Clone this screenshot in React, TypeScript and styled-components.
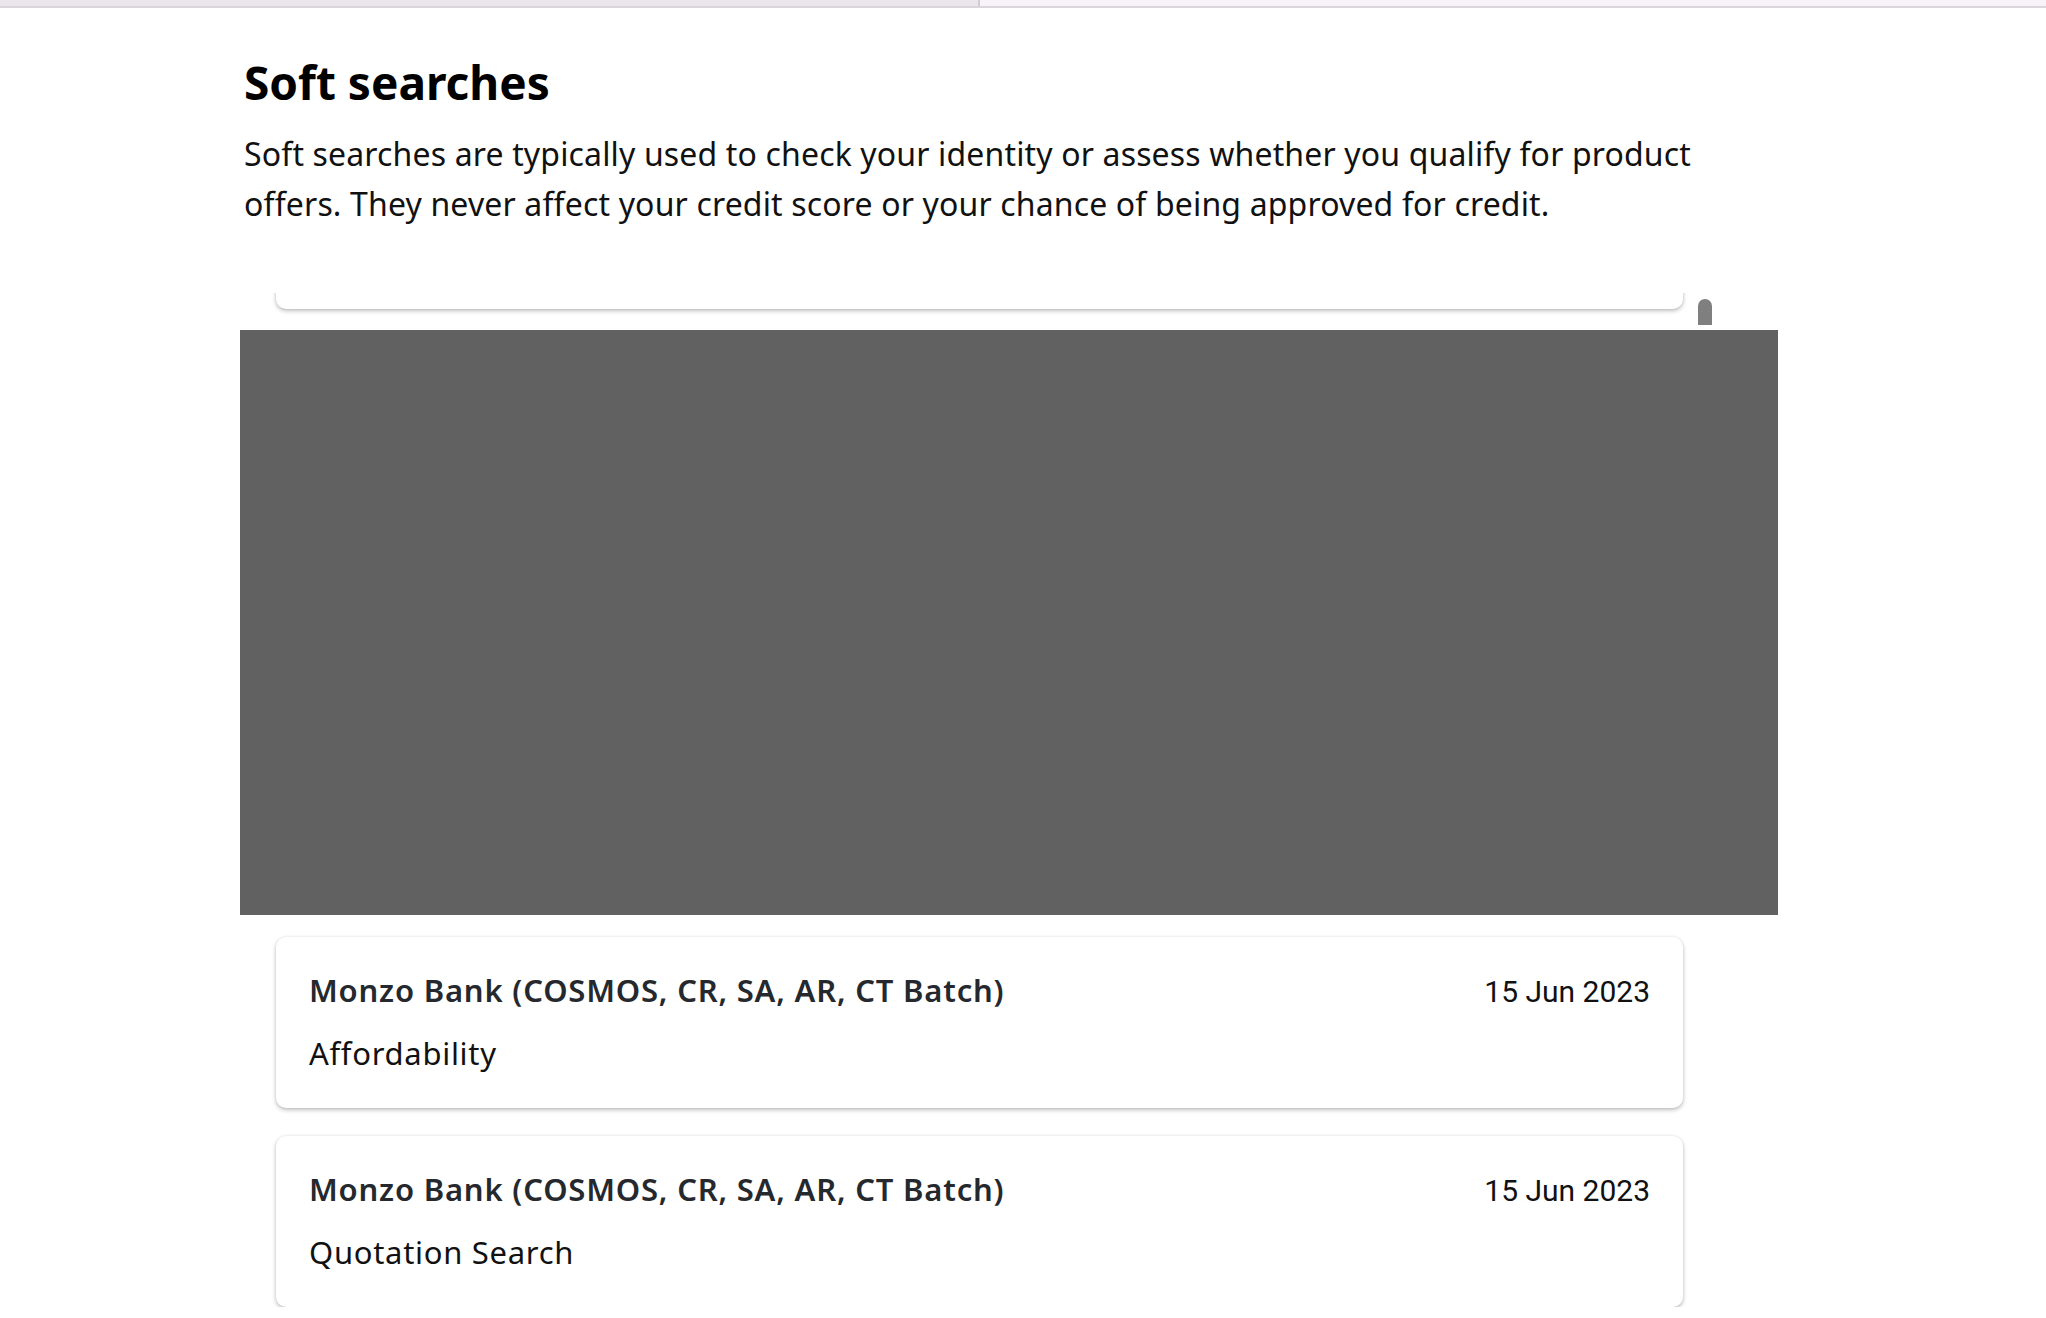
import React from "react";
import styled, { createGlobalStyle } from "styled-components";

const GlobalStyle = createGlobalStyle`
  html, body {
    margin: 0;
    padding: 0;
    background: #ffffff;
  }
  body {
    font-family: "Noto Sans", "Liberation Sans", sans-serif;
    color: #000;
  }
`;

const TabBar = styled.div`
  display: flex;
  height: 6px;
  border-bottom: 2px solid #d8d6d9;
`;

const Tab = styled.div<{ $active?: boolean }>`
  flex: ${({ $active }) => ($active ? "0 0 978px" : "1")};
  background: ${({ $active }) => ($active ? "#ebe6ec" : "#f8f3f8")};
  border-right: ${({ $active }) => ($active ? "2px solid #cfcbd1" : "none")};
`;

const Page = styled.main`
  width: 1538px;
  margin-left: 240px;
  padding-top: 47px;
`;

const Heading = styled.h2`
  margin: 0 0 0 4px;
  font-size: 46px;
  line-height: 55px;
  font-weight: 700;
  color: #000;
`;

const Intro = styled.p`
  margin: 19px 0 0 4px;
  font-size: 32px;
  line-height: 50px;
  letter-spacing: 0.15px;
  color: #111;
  width: 1520px;
`;

const ScrollBox = styled.div`
  margin-top: 64px;
  height: 37px;
  display: flex;
  gap: 15px;
  padding-left: 36px;
  overflow: hidden;
`;

const ScrollList = styled.div`
  width: 1407px;
  display: flex;
  flex-direction: column;
  justify-content: flex-end;
  padding-bottom: 21px;
  box-sizing: border-box;
`;

const Track = styled.div`
  width: 14px;
  padding-top: 6px;
`;

const Thumb = styled.div`
  height: 26px;
  background: #7f7f7f;
  border-radius: 7px 7px 0 0;
`;

const Redacted = styled.div`
  height: 585px;
  background: #616161;
`;

const CardList = styled.ul`
  list-style: none;
  margin: 22px 0 0 36px;
  padding: 0;
  width: 1407px;
  display: flex;
  flex-direction: column;
  gap: 28px;
`;

const Card = styled.li`
  flex-shrink: 0;
  height: 171px;
  box-sizing: border-box;
  padding: 33px 33px 0;
  background: #fff;
  border-radius: 10px;
  box-shadow: 0 2px 4px rgba(0, 0, 0, 0.25), 0 0 3px rgba(0, 0, 0, 0.07);
`;

const CardHead = styled.div`
  display: flex;
  justify-content: space-between;
  align-items: baseline;
`;

const Lender = styled.span`
  font-size: 31px;
  line-height: 40px;
  font-weight: 600;
  letter-spacing: 0.8px;
  color: #25292d;
`;

const SearchDate = styled.span`
  font-family: Roboto, "Liberation Sans", sans-serif;
  font-size: 30px;
  line-height: 40px;
  color: #111;
`;

const Purpose = styled.div`
  margin-top: 21px;
  font-size: 31px;
  line-height: 40px;
  letter-spacing: 0.7px;
  color: #111;
`;

const searches = [
  {
    id: 1,
    lender: "Monzo Bank (COSMOS, CR, SA, AR, CT Batch)",
    date: "15 Jun 2023",
    purpose: "Affordability",
  },
  {
    id: 2,
    lender: "Monzo Bank (COSMOS, CR, SA, AR, CT Batch)",
    date: "15 Jun 2023",
    purpose: "Quotation Search",
  },
];

const App = () => {
  return (
    <>
      <GlobalStyle />
      <TabBar>
        <Tab $active />
        <Tab />
      </TabBar>
      <Page>
        <Heading>Soft searches</Heading>
        <Intro>
          Soft searches are typically used to check your identity or assess
          whether you qualify for product
          <br />
          offers. They never affect your credit score or your chance of being
          approved for credit.
        </Intro>

        <ScrollBox>
          <ScrollList>
            <Card as="div" />
          </ScrollList>
          <Track>
            <Thumb />
          </Track>
        </ScrollBox>

        <Redacted />

        <CardList>
          {searches.map((item) => (
            <Card key={item.id}>
              <CardHead>
                <Lender>{item.lender}</Lender>
                <SearchDate>{item.date}</SearchDate>
              </CardHead>
              <Purpose>{item.purpose}</Purpose>
            </Card>
          ))}
        </CardList>
      </Page>
    </>
  );
};

export default App;
